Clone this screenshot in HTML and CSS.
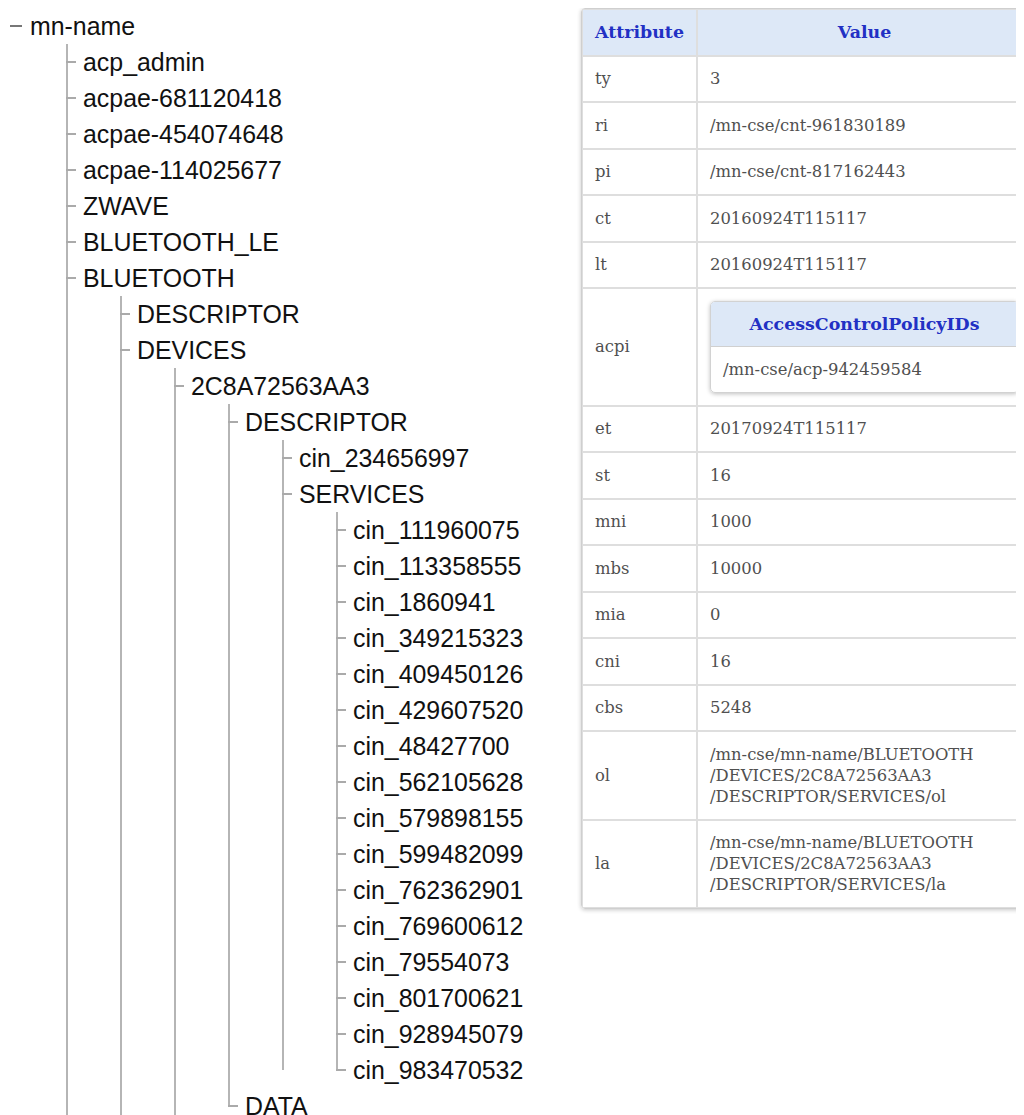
FILE: index.html
```html
<!DOCTYPE html>
<html lang="en">
<head>
<meta charset="utf-8">
<title>mn-name resource tree</title>
<link rel="stylesheet" href="styles.css">
</head>
<body>
<div class="page">
  <ul class="tree">
    <li class="root">
      <div class="label"><span class="toggle"></span>mn-name</div>
      <ul class="branch trail">
        <li><div class="label">acp_admin</div></li>
        <li><div class="label">acpae-681120418</div></li>
        <li><div class="label">acpae-454074648</div></li>
        <li><div class="label">acpae-114025677</div></li>
        <li><div class="label">ZWAVE</div></li>
        <li><div class="label">BLUETOOTH_LE</div></li>
        <li>
          <div class="label">BLUETOOTH</div>
          <ul class="branch trail">
            <li><div class="label">DESCRIPTOR</div></li>
            <li>
              <div class="label">DEVICES</div>
              <ul class="branch trail">
                <li>
                  <div class="label">2C8A72563AA3</div>
                  <ul class="branch">
                    <li>
                      <div class="label">DESCRIPTOR</div>
                      <ul class="branch">
                        <li><div class="label">cin_234656997</div></li>
                        <li>
                          <div class="label">SERVICES</div>
                          <ul class="branch">
                            <li><div class="label">cin_111960075</div></li>
                            <li><div class="label">cin_113358555</div></li>
                            <li><div class="label">cin_1860941</div></li>
                            <li><div class="label">cin_349215323</div></li>
                            <li><div class="label">cin_409450126</div></li>
                            <li><div class="label">cin_429607520</div></li>
                            <li><div class="label">cin_48427700</div></li>
                            <li><div class="label">cin_562105628</div></li>
                            <li><div class="label">cin_579898155</div></li>
                            <li><div class="label">cin_599482099</div></li>
                            <li><div class="label">cin_762362901</div></li>
                            <li><div class="label">cin_769600612</div></li>
                            <li><div class="label">cin_79554073</div></li>
                            <li><div class="label">cin_801700621</div></li>
                            <li><div class="label">cin_928945079</div></li>
                            <li><div class="label">cin_983470532</div></li>
                          </ul>
                        </li>
                      </ul>
                    </li>
                    <li><div class="label">DATA</div></li>
                  </ul>
                </li>
              </ul>
            </li>
          </ul>
        </li>
      </ul>
    </li>
  </ul>

  <div class="detail">
    <table class="attrs">
      <thead>
        <tr><th class="key">Attribute</th><th>Value</th></tr>
      </thead>
      <tbody>
        <tr><td>ty</td><td>3</td></tr>
        <tr><td>ri</td><td>/mn-cse/cnt-961830189</td></tr>
        <tr><td>pi</td><td>/mn-cse/cnt-817162443</td></tr>
        <tr><td>ct</td><td>20160924T115117</td></tr>
        <tr><td>lt</td><td>20160924T115117</td></tr>
        <tr>
          <td>acpi</td>
          <td>
            <table class="inner">
              <thead><tr><th>AccessControlPolicyIDs</th></tr></thead>
              <tbody><tr><td>/mn-cse/acp-942459584</td></tr></tbody>
            </table>
          </td>
        </tr>
        <tr><td>et</td><td>20170924T115117</td></tr>
        <tr><td>st</td><td>16</td></tr>
        <tr><td>mni</td><td>1000</td></tr>
        <tr><td>mbs</td><td>10000</td></tr>
        <tr><td>mia</td><td>0</td></tr>
        <tr><td>cni</td><td>16</td></tr>
        <tr><td>cbs</td><td>5248</td></tr>
        <tr><td>ol</td><td>/mn-cse/mn-name/BLUETOOTH<br>/DEVICES/2C8A72563AA3<br>/DESCRIPTOR/SERVICES/ol</td></tr>
        <tr><td>la</td><td>/mn-cse/mn-name/BLUETOOTH<br>/DEVICES/2C8A72563AA3<br>/DESCRIPTOR/SERVICES/la</td></tr>
      </tbody>
    </table>
  </div>
</div>
</body>
</html>
```

FILE: styles.css
```css
html {
  overflow: hidden;
}

body {
  margin: 8px;
  background: #fff;
}

.page {
  display: flex;
  align-items: flex-start;
  width: 1040px;
}

/* ---------- resource tree ---------- */

.tree,
.branch {
  list-style: none;
  margin: 0;
  padding: 0;
}

.tree {
  flex: none;
  width: 573px;
  font-family: "Liberation Sans", Arial, sans-serif;
  font-size: 24.9px;
  color: #111;
}

.label {
  height: 36px;
  line-height: 36px;
  white-space: nowrap;
}

.root > .label {
  display: flex;
  align-items: center;
  padding-left: 2px;
}

.toggle {
  display: inline-block;
  width: 12px;
  height: 2px;
  margin-right: 8px;
  background: #777;
}

.branch {
  position: relative;
  margin-left: 37px;
  padding-left: 17px;
}

.root > .branch {
  margin-left: 58px;
}

/* vertical guide: stops at the middle of the last row */
.branch::before {
  content: "";
  position: absolute;
  left: 0;
  top: 0;
  bottom: 18px;
  width: 2px;
  background: #b5b5b5;
}

/* guide of a list that keeps going below the fold */
.branch.trail::before {
  bottom: -120px;
}

.branch > li {
  position: relative;
}

/* horizontal connector to each item */
.branch > li > .label::before {
  content: "";
  position: absolute;
  left: -17px;
  top: 17px;
  width: 10px;
  height: 1.5px;
  background: #aaa;
}

/* ---------- attribute table ---------- */

.detail {
  flex: none;
  width: 452px;
}

.attrs {
  width: 100%;
  border-collapse: separate;
  border-spacing: 0;
  border: 1px solid #cfcfcf;
  border-radius: 4px;
  box-shadow: 0 1px 4px rgba(0, 0, 0, 0.22);
  font-family: "DejaVu Serif", serif;
  font-size: 16.4px;
  color: #505050;
}

.attrs th,
.attrs td {
  border: 1px solid #dedede;
  line-height: 21px;
  padding: 11.75px 12px;
  vertical-align: middle;
}

.attrs th {
  background: #dde8f7;
  color: #2230c4;
  font-size: 17.4px;
  font-weight: bold;
  text-align: center;
}

.attrs th.key {
  width: 89px;
  padding-left: 12px;
  padding-right: 12px;
}

.attrs td {
  text-align: left;
}

.inner {
  width: 100%;
  border-collapse: separate;
  border-spacing: 0;
  border: 1px solid #d2d2d2;
  border-radius: 5px;
  box-shadow: 0 1px 4px rgba(0, 0, 0, 0.25);
  overflow: hidden;
}

.inner th,
.inner td {
  border: 0;
  padding: 11.75px 12px;
}

.inner th {
  border-bottom: 1px solid #d0d0d0;
}
```
